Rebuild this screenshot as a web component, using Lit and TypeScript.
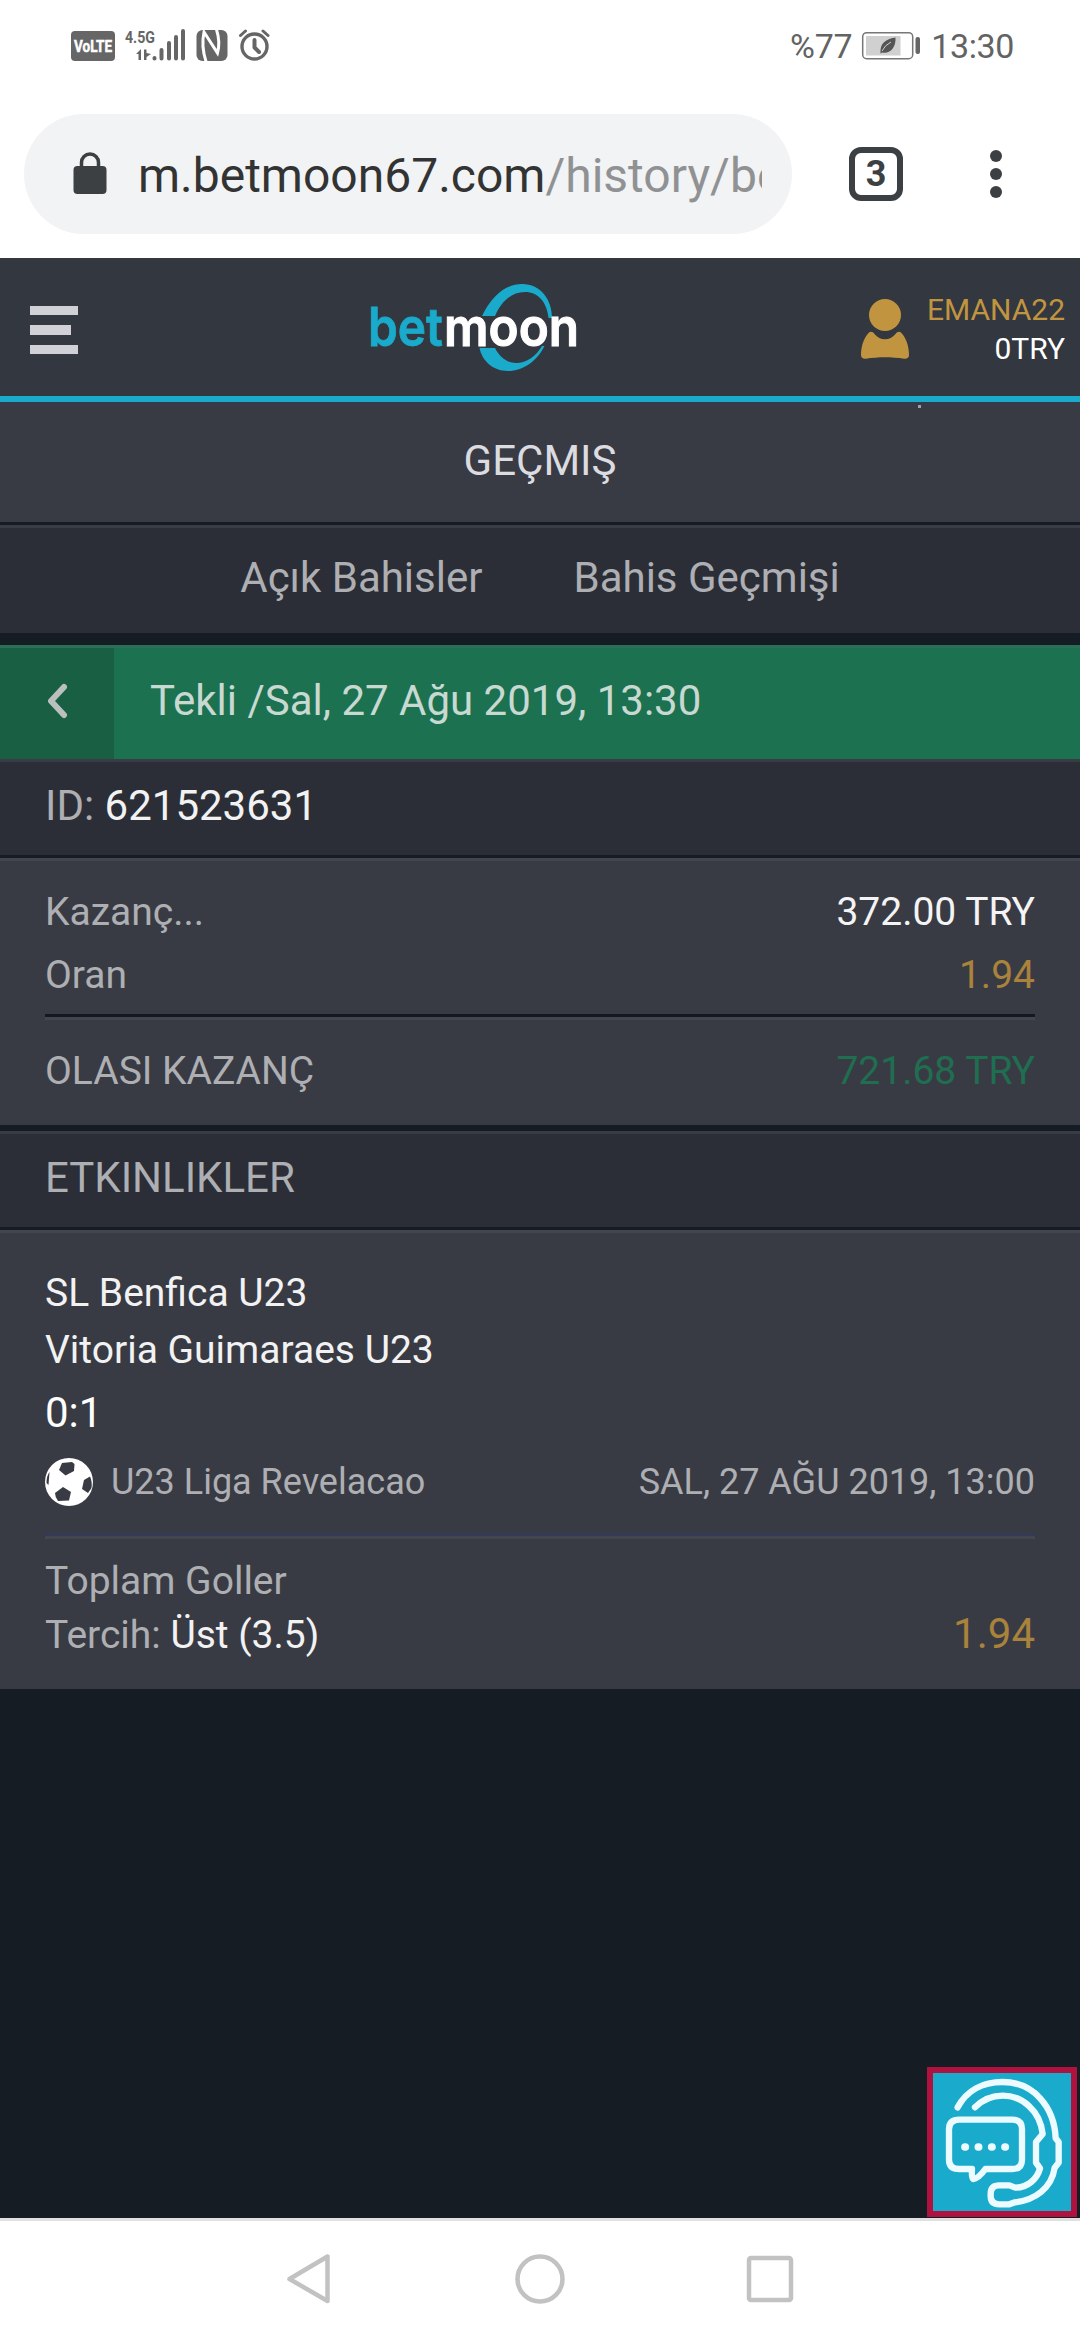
import { LitElement, html, css, svg } from "lit";
import { customElement, property } from "lit/decorators.js";

@customElement("status-bar")
class StatusBar extends LitElement {
  static styles = css`
    :host { display: flex; height: 90px; box-sizing: border-box; background: #fff; color: #636363; padding: 2px 66px 0 71px; justify-content: space-between; align-items: center; font: 34px/40px Roboto, sans-serif; }
    .group { display: flex; align-items: center; height: 90px; }
    svg { display: block; }
    .battery { margin: 0 10px 0 9px; }
    .percent { letter-spacing: -0.3px; }
    .clock { letter-spacing: -0.4px; }
    .small { font: 700 17px Roboto, sans-serif; }
    .badge { font: 700 17px Roboto, sans-serif; }
  `;
  render() {
    return html`
      <div class="group">
        <svg width="200" height="40" viewBox="71 26 200 40" fill="#666">
          <rect x="71" y="31" width="44" height="30" rx="4" />
          <text class="badge" x="74" y="52" fill="#fff" stroke="#fff" stroke-width=".5" textLength="38" lengthAdjust="spacingAndGlyphs">VoLTE</text>
          <text class="small" x="125" y="43" textLength="30" lengthAdjust="spacingAndGlyphs">4.5G</text>
          <path d="M136 54 L141 49 V60 H138.500 V54Z M144 49.500 V60 H146.500 V57 L151 54 L146.500 53 V49.500Z" />
          <g stroke="#666" stroke-width="4" stroke-linecap="round">
            <path d="M154.500 58v.5M161.500 50v8.500M169 43v15.500M176 37v21.500M183 31v27.500" />
          </g>
          <rect x="196.500" y="30" width="31" height="31" rx="6" />
          <path d="M206 61.500 Q201 46 204 32 L217.500 53 Q220.500 42 216.500 29.500" fill="none" stroke="#fff" stroke-width="3" />
          <g fill="none" stroke="#666" stroke-linecap="round" stroke-linejoin="round">
            <circle cx="254.500" cy="46.500" r="12.500" stroke-width="3.400" />
            <path d="M254.500 40v7.500l4.500 4.500" stroke-width="4" />
            <path d="M240.500 35.500l5-4.500M268 35.500l-5-4.500" stroke-width="3" />
          </g>
        </svg>
      </div>
      <div class="group">
        <span class="percent">%77</span>
        <svg class="battery" width="60" height="30" viewBox="861 31 60 30">
          <rect x="862.700" y="32.700" width="50" height="26" rx="4" fill="#fff" stroke="#777" stroke-width="1.500" />
          <rect x="866" y="36" width="34.500" height="19.500" fill="#d0d0d0" />
          <path d="M895.500 37.500 C896 47 891 54 882 52.500 L880.500 53.500 C880 44 884 39.500 895.500 37.500Z" fill="#555" />
          <path d="M882 51 Q885 45 891 42" fill="none" stroke="#d0d0d0" stroke-width="1" />
          <rect x="915.500" y="37" width="4.500" height="17" rx="2" fill="#666" />
        </svg>
        <span class="clock">13:30</span>
      </div>
    `;
  }
}

@customElement("browser-bar")
class BrowserBar extends LitElement {
  static styles = css`
    :host { display: flex; align-items: center; height: 168px; box-sizing: border-box; background: #fff; padding: 0 76px 0 24px; font-family: Roboto, sans-serif; }
    .pill { display: flex; align-items: center; width: 768px; height: 120px; box-sizing: border-box; border-radius: 60px; background: #f1f3f4; padding: 0 30px 0 49px; }
    .lock { flex: none; margin: 0 31px 3px 0; }
    .url { flex: 1; overflow: hidden; white-space: nowrap; font-size: 48px; line-height: 64px; color: #333; padding-top: 3px; }
    .path { color: #909193; }
    .tabs { flex: none; display: flex; align-items: center; justify-content: center; box-sizing: border-box; width: 54px; height: 54px; margin-left: 57px; border: 6px solid #3c4043; border-radius: 12px; color: #3c4043; font: 700 36px/42px Roboto, sans-serif; }
    .more { display: flex; flex-direction: column; gap: 6px; margin-left: auto; padding: 0 2px; }
    .dot { width: 12px; height: 12px; border-radius: 50%; background: #3c4043; }
  `;
  render() {
    return html`
      <div class="pill">
        <svg class="lock" width="34" height="42" viewBox="0 0 34 42">
          <rect x="0.500" y="14" width="33" height="28" rx="4" fill="#3c4043" />
          <path d="M8.500 16V10.500a8.500 8.500 0 0 1 17 0V16" fill="none" stroke="#3c4043" stroke-width="3.500" />
        </svg>
        <div class="url">m.betmoon67.com<span class="path">/history/be</span></div>
      </div>
      <div class="tabs">3</div>
      <div class="more"><i class="dot"></i><i class="dot"></i><i class="dot"></i></div>
    `;
  }
}

@customElement("site-header")
class SiteHeader extends LitElement {
  static styles = css`
    :host { display: grid; grid-template-columns: 331px auto 1fr; align-items: center; height: 144px; box-sizing: border-box; background: #33373f; border-bottom: 6px solid #1aaacb; padding: 0 15px 0 30px; font-family: Roboto, sans-serif; }
    .menu { display: flex; flex-direction: column; gap: 10px; padding-top: 6px; }
    .line { height: 9.500px; width: 48px; background: #d0d0d6; }
    .short { width: 41px; }
    .logo { display: block; padding-top: 1px; }
    .word { font: 600 53px Inter, sans-serif; }
    .account { display: flex; justify-content: flex-end; align-items: center; gap: 18px; padding-top: 4px; }
    .names { text-align: right; font-size: 30px; line-height: 39px; color: #c1953f; }
    .balance { color: #fff; }
  `;
  render() {
    return html`
      <div class="menu"><i class="line"></i><i class="line short"></i><i class="line"></i></div>
      <svg class="logo" width="226" height="90" viewBox="361 284 226 90">
        <path d="M482 317 C492 296 506 285 522 285 C541 285 552 301 552 319 H548.500 C547 303 538 293 525 293 C511 293 501 303 495 317Z" fill="#1aaacb" />
        <path d="M479.500 349 H495 C500 359 508 364 516 364 C527 364 536 357 542 347 H544.500 C537 362 523 372 508 372 C492 372 482 361 479.500 349Z" fill="#1aaacb" />
        <text class="word" x="368" y="347" fill="#1aaacb" stroke="#1aaacb" stroke-width=".8" textLength="75" lengthAdjust="spacingAndGlyphs">bet</text>
        <text class="word" x="444" y="347" fill="#fff" stroke="#fff" stroke-width="1" textLength="135" lengthAdjust="spacingAndGlyphs">moon</text>
      </svg>
      <div class="account">
        <svg width="48" height="62" viewBox="861 299 48 62" fill="#c1953f">
          <circle cx="885" cy="316" r="16" />
          <path d="M869 333.500 C871 332 873 333 874.500 335 C880 342 890 342 895.500 335 C897 333 899 332 901 333.500 C906.500 339 909 348 909 356 C909 359 907 360 904 359.700 C892 357.700 878 357.700 866 359.700 C863 360 861 359 861 356 C861 348 863.500 339 869 333.500Z" />
        </svg>
        <div class="names"><div>EMANA22</div><div class="balance">0TRY</div></div>
      </div>
    `;
  }
}

@customElement("bet-row")
class BetRow extends LitElement {
  @property() label = "";
  @property() value = "";
  @property() tone = "plain";
  static styles = css`
    :host { display: flex; justify-content: space-between; align-items: center; }
    .plain { color: #f4f4f4; }
    .gold { color: #a9823c; }
    .green { color: #1f6e50; }
  `;
  render() {
    return html`<span>${this.label}</span><span class=${this.tone}>${this.value}</span>`;
  }
}

const ball = svg`
  <circle cx="24" cy="24" r="24" fill="#fff" />
  <g fill="#393b44">
    <path d="M17 5 L27 4 L29.500 6 L29 13 L20.500 17.500 L14 12Z" />
    <path d="M18 29 L26 34 L24 42.500 L13 43 Q10 39 10 35Z" />
    <path d="M39 22 L45 18.500 Q47.500 24 46.500 30 L43 35 L37 31Z" />
    <path d="M4.500 14 L3.500 27 L1.500 25 Q1.500 18 4.500 14Z" />
  </g>`;

@customElement("bet-details")
class BetDetails extends LitElement {
  static styles = css`
    :host { display: flex; flex-direction: column; flex: 1; background: #161c23; color: #aeafb3; font: 39px/54px Roboto, sans-serif; }
    .title { display: flex; align-items: center; justify-content: center; position: relative; height: 120px; box-sizing: border-box; padding-bottom: 3px; background: linear-gradient(#343b48 0, #393b44 6px); font-size: 42px; color: #dcdce0; }
    .speck { position: absolute; left: 918px; top: 3px; width: 3px; height: 3px; background: #a0a1a6; }
    .bar { display: flex; align-items: center; box-sizing: border-box; padding: 0 45px 6px; background: #2b2e37; border-top: 3px solid #393c44; font-size: 42px; white-space: pre; }
    .views { height: 108px; margin-top: 3px; justify-content: center; gap: 91px; }
    .slip { display: flex; height: 114px; box-sizing: border-box; margin-top: 12px; border-top: 3px solid #2b6f58; background: #1c7150; font-size: 42px; color: #c8d9d2; }
    .back { display: flex; align-items: center; justify-content: center; width: 114px; box-sizing: border-box; padding-bottom: 5px; background: #185f43; }
    .when { display: flex; align-items: center; padding: 0 0 6px 36px; }
    .id { height: 96px; }
    .bright { color: #f2f2f3; }
    .panel { margin-top: 3px; padding: 0 45px; background: #393b44; border-top: 3px solid #44464f; box-sizing: border-box; }
    .sums { height: 267px; padding-top: 19px; }
    .row { height: 63px; }
    .rule { height: 3px; background: #151822; border-bottom: 3px solid #44464f; margin-top: 8px; }
    .total { height: 101px; }
    .heading { height: 96px; margin-top: 6px; }
    .event { height: 459px; padding-top: 32px; }
    .team { height: 57px; line-height: 57px; color: #f2f2f3; }
    .score { height: 67px; line-height: 67px; font-size: 42px; color: #fff; }
    .league { display: flex; align-items: center; height: 72px; font-size: 36px; }
    .ball { margin-right: 18px; }
    .date { margin-left: auto; }
    .blue { margin: 15px 0; background: #353b54; }
    .pick { display: flex; justify-content: space-between; height: 54px; white-space: pre; }
    .odd { font-size: 42px; line-height: 52px; color: #a9823c; }
    .space { flex: 1; }
    .chat { align-self: flex-end; box-sizing: border-box; width: 150px; height: 150px; border: 6px solid #b01240; background: #1aaacb; margin: 0 3px 1px; }
    svg { display: block; }
  `;
  render() {
    return html`
      <div class="title">GEÇMIŞ<i class="speck"></i></div>
      <div class="bar views"><span>Açık Bahisler</span><span>Bahis Geçmişi</span></div>
      <div class="slip">
        <div class="back">
          <svg width="22" height="36" viewBox="0 0 22 36"><path d="M18 4 L5 18 L18 32" fill="none" stroke="#b9c0bd" stroke-width="6" stroke-linecap="round" stroke-linejoin="round" /></svg>
        </div>
        <div class="when">Tekli /Sal, 27 Ağu 2019, 13:30</div>
      </div>
      <div class="bar id"><span>ID: </span><span class="bright">621523631</span></div>
      <div class="panel sums">
        <bet-row class="row" label="Kazanç..." value="372.00 TRY"></bet-row>
        <bet-row class="row" label="Oran" value="1.94" tone="gold"></bet-row>
        <div class="rule"></div>
        <bet-row class="total" label="OLASI KAZANÇ" value="721.68 TRY" tone="green"></bet-row>
      </div>
      <div class="bar heading">ETKINLIKLER</div>
      <div class="panel event">
        <div class="team">SL Benfica U23</div>
        <div class="team">Vitoria Guimaraes U23</div>
        <div class="score">0:1</div>
        <div class="league">
          <svg class="ball" width="48" height="48" viewBox="0 0 48 48">${ball}</svg>
          <span>U23 Liga Revelacao</span><span class="date">SAL, 27 AĞU 2019, 13:00</span>
        </div>
        <div class="rule blue"></div>
        <div>Toplam Goller</div>
        <div class="pick"><span>Tercih: <span class="bright">Üst (3.5)</span></span><span class="odd">1.94</span></div>
      </div>
      <div class="space"></div>
      <div class="chat">
        <svg width="138" height="138" viewBox="39 39 414 414" fill="none" stroke="#ebfbff" stroke-width="19" stroke-linecap="round" stroke-linejoin="round">
          <path d="M113 142 C140 90 190 66 248 66 C340 66 403 140 407 235 L416 246 V308 L404 323 C395 385 345 420 285 427 L268 433 H238 Q212 433 212 409 V401 Q212 376 238 376 H268 L286 383 C325 383 352 355 360 325 L348 308 V246 L368 222 C360 150 305 107 248 107 Q200 107 165 142" />
          <path d="M118 179 H277 Q306 179 306 208 V299 Q306 327 277 327 H196 Q176 355 160 357 Q154 352 156 327 H118 Q87 327 87 299 V208 Q87 179 118 179Z" />
          <path d="M135 261h1M175 261h1M215 261h1M255 261h1" stroke-width="23" />
        </svg>
      </div>
    `;
  }
}

@customElement("nav-bar")
class NavBar extends LitElement {
  static styles = css`
    :host { display: flex; justify-content: space-between; align-items: center; box-sizing: border-box; height: 122px; border-top: 3px solid #e0e0e0; background: #fff; padding: 0 286px 3px 285px; }
    svg { display: block; }
  `;
  render() {
    return html`
      <svg width="48" height="52" viewBox="285 2253 48 52" fill="none" stroke="#c2c2c2" stroke-width="4.500" stroke-linejoin="round"><path d="M327.500 2256.500 V2301 L289.500 2279Z" /></svg>
      <svg width="52" height="52" viewBox="0 0 52 52" fill="none" stroke="#c2c2c2" stroke-width="4.500"><circle cx="26" cy="26" r="22.500" /></svg>
      <svg width="48" height="48" viewBox="0 0 48 48" fill="none" stroke="#c2c2c2" stroke-width="4.500"><rect x="3" y="3" width="42" height="42" rx="2" /></svg>
    `;
  }
}

@customElement("app-root")
class AppRoot extends LitElement {
  static styles = css`
    :host { display: flex; flex-direction: column; width: 1080px; height: 2340px; overflow: hidden; background: #fff; }
  `;
  render() {
    return html`
      <status-bar></status-bar>
      <browser-bar></browser-bar>
      <site-header></site-header>
      <bet-details></bet-details>
      <nav-bar></nav-bar>
    `;
  }
}
